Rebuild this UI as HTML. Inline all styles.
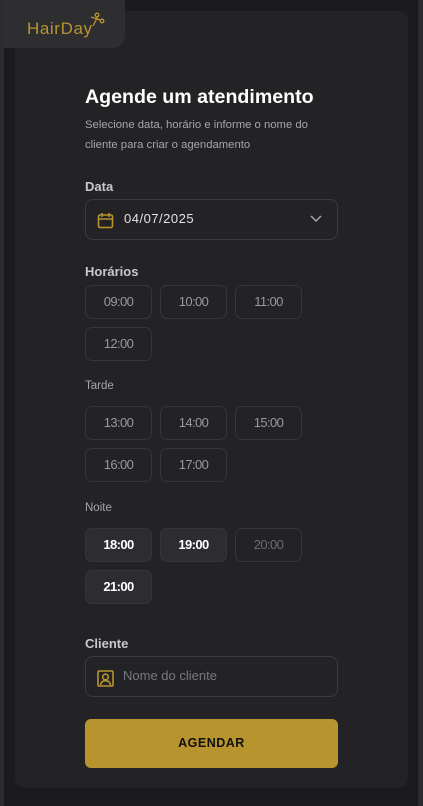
<!DOCTYPE html>
<html><head><meta charset="utf-8"><style>
*{margin:0;padding:0;box-sizing:border-box}
body{width:423px;height:806px;background:#1b1b1d;font-family:"Liberation Sans",sans-serif;position:relative;overflow:hidden}
.edgeL{position:absolute;left:0;top:0;width:4px;height:806px;background:#2c2c2e}
.edgeR{position:absolute;right:0;top:0;width:5px;height:806px;background:#2c2c2e}
.card{position:absolute;left:15px;top:11px;width:393px;height:777px;background:#232325;border-radius:10px}
.logo{position:absolute;left:4px;top:0;width:121px;height:48px;background:#2e2d30;border-radius:0 0 12px 0;color:#b8942f;font-size:17px;letter-spacing:0.6px;padding:19px 0 0 23px}
.logo svg{position:absolute;left:86px;top:12px}
.a{position:absolute;left:85px}
h1{color:#fff;font-size:19.6px;font-weight:bold}
.sub{color:#a6a4ad;font-size:11.3px;line-height:19.5px;top:116px}
.lbl{color:#c9c7ce;font-size:13px;font-weight:bold}
.inp{width:253px;height:41px;border:1px solid #3c3b40;border-radius:8px}
.t{position:absolute;width:67px;height:34px;border:1px solid #363539;border-radius:7px;color:#9a98a0;font-size:13px;text-align:center;line-height:32px;letter-spacing:-0.6px}
.on{background:#2d2c30;color:#fff;font-weight:bold}
.off{color:#6c6a72}
.sec{color:#a6a4ad;font-size:11.5px}
.btn{width:253px;height:49px;background:#b8942f;border-radius:6px;top:719px;text-align:center;line-height:49px;font-size:12.5px;font-weight:bold;color:#111;letter-spacing:.5px}
</style></head><body>
<div class="edgeL"></div><div class="edgeR"></div>
<div class="card"></div>
<div class="logo">HairDay<svg width="16" height="16" viewBox="0 0 16 16" fill="none" stroke="#b8942f" stroke-width="1.3"><circle cx="7" cy="3" r="1.8"/><circle cx="12" cy="9" r="1.8"/><path d="M7.5 5L3 14M10.5 8L1 5"/></svg></div>
<div class="a" style="top:86px"><h1>Agende um atendimento</h1></div>
<div class="a sub">Selecione data, horário e informe o nome do<br>cliente para criar o agendamento</div>
<div class="a lbl" style="top:179px">Data</div>
<div class="a inp" style="top:199px"></div>
<svg class="a" style="left:97px;top:212px" width="17" height="17" viewBox="0 0 17 17" fill="none" stroke="#b8942f" stroke-width="1.6"><rect x="1.5" y="3" width="14" height="12.5" rx="1.5"/><path d="M1.5 7h14M5 1v4M12 1v4"/></svg>
<div class="a" style="left:124px;top:211px;color:#e4e2e8;font-size:13px;letter-spacing:.5px">04/07/2025</div>
<svg class="a" style="left:310px;top:215px" width="12" height="8" viewBox="0 0 12 8" fill="none" stroke="#a6a4ad" stroke-width="1.5"><path d="M1 1l5 5 5-5"/></svg>
<div class="a lbl" style="top:264px">Horários</div>
<div class="t" style="left:85px;top:285px">09:00</div>
<div class="t" style="left:160px;top:285px">10:00</div>
<div class="t" style="left:235px;top:285px">11:00</div>
<div class="t" style="left:85px;top:327px">12:00</div>
<div class="a sec" style="top:380px">Tarde</div>
<div class="t" style="left:85px;top:406px">13:00</div>
<div class="t" style="left:160px;top:406px">14:00</div>
<div class="t" style="left:235px;top:406px">15:00</div>
<div class="t" style="left:85px;top:448px">16:00</div>
<div class="t" style="left:160px;top:448px">17:00</div>
<div class="a sec" style="top:502px">Noite</div>
<div class="t on" style="left:85px;top:528px">18:00</div>
<div class="t on" style="left:160px;top:528px">19:00</div>
<div class="t off" style="left:235px;top:528px">20:00</div>
<div class="t on" style="left:85px;top:570px">21:00</div>
<div class="a lbl" style="top:636px">Cliente</div>
<div class="a inp" style="top:656px"></div>
<svg class="a" style="left:97px;top:670px" width="17" height="17" viewBox="0 0 17 17" fill="none" stroke="#b8942f" stroke-width="1.6"><rect x="1" y="1" width="15" height="15" rx="1"/><circle cx="8.5" cy="7" r="2.8"/><path d="M3.5 15c.5-3 2.5-4.3 5-4.3s4.5 1.3 5 4.3"/></svg>
<div class="a" style="left:123px;top:668px;color:#7a7880;font-size:13px">Nome do cliente</div>
<div class="a btn">AGENDAR</div>
</body></html>
